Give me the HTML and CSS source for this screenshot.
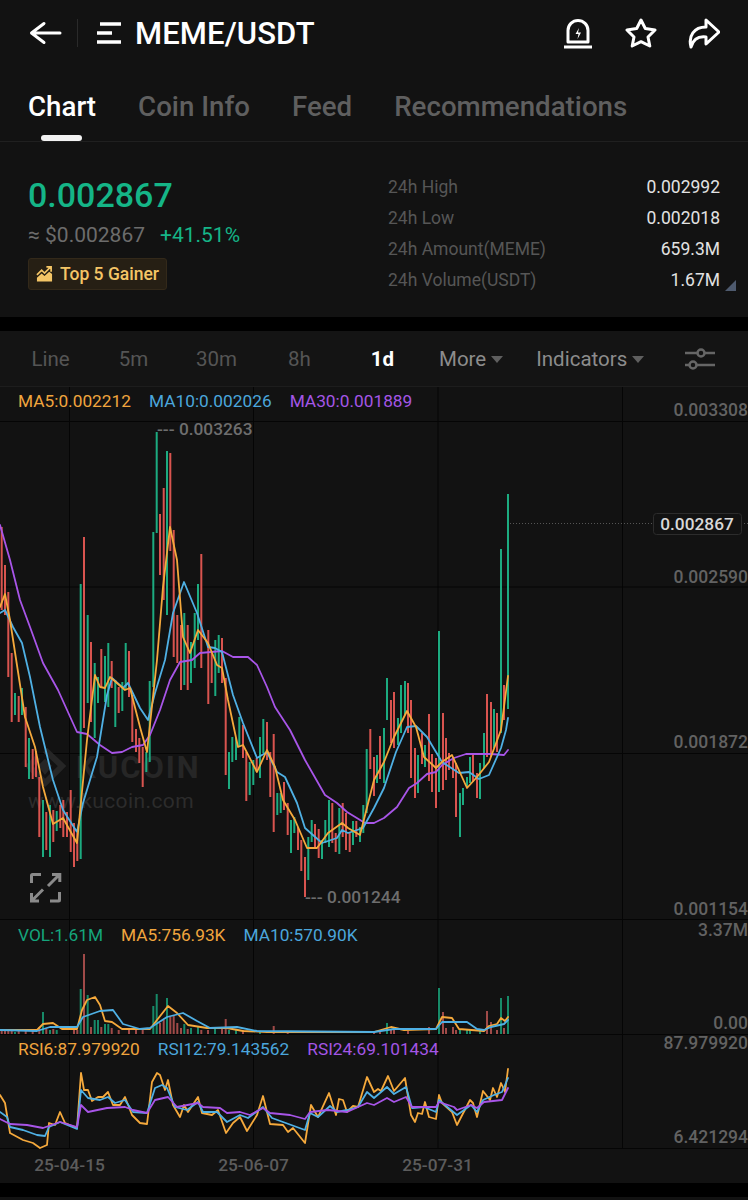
FILE: index.html
```html
<!DOCTYPE html>
<html lang="en">
<head>
    <meta charset="UTF-8">
    <meta name="viewport" content="width=device-width, initial-scale=1.0">
    <title>MEME/USDT</title>
    <link rel="stylesheet" href="styles.css">
</head>
<body>
    <section class="summary">
        <header class="topbar">
            <svg class="icon back" viewBox="0 0 34 24"><path d="M31 12H3M15 2.500L2.500 12L15 21.500"/></svg>
            <span class="divider"></span>
            <svg class="icon menu" viewBox="0 0 26 22"><path d="M4 2H25M1 11H16M1 20H25"/></svg>
            <h1 class="pair">MEME/USDT</h1>
            <div class="actions">
                <svg class="icon" viewBox="0 0 32 32"><path d="M6 25V13.500a10 10 0 0 1 20 0V25Z"/><path class="solid" d="M2 30H30" /><path class="bolt" d="M17 11l-3.500 6h3l-1 5l3.500-6.500h-3z"/></svg>
                <svg class="icon star" viewBox="0 0 32 32"><path d="M16 3L20.300 11.500L30 13L23 20L24.800 29L16 24.700L7.200 29L9 20L2 13L11.700 11.500Z"/></svg>
                <svg class="icon" viewBox="0 0 32 32"><path d="M18 3L31 15L18 27V20C10 19 5 23 3 30C0 19 6 10 18 10Z"/></svg>
            </div>
        </header>

        <nav class="tabs">
            <a class="tab active">Chart</a>
            <a class="tab">Coin Info</a>
            <a class="tab">Feed</a>
            <a class="tab">Recommendations</a>
        </nav>

        <div class="ticker">
            <div class="price-box">
                <div class="price">0.002867</div>
                <div class="price-sub">
                    <span class="fiat">≈ $0.002867</span>
                    <span class="change">+41.51%</span>
                </div>
                <div class="badge">
                    <svg class="badge-icon" viewBox="0 0 18 18"><path class="badge-fill" d="M1 17V13L6 8.500L9 11L14 6.500L17 9V17Z"/><path class="badge-line" d="M1 10L6 5L9 8L15 2M11 1.500H16V6.500"/></svg>
                    Top 5 Gainer
                </div>
            </div>
            <dl class="stats">
                <div class="stat"><dt>24h High</dt><dd>0.002992</dd></div>
                <div class="stat"><dt>24h Low</dt><dd>0.002018</dd></div>
                <div class="stat"><dt>24h Amount(MEME)</dt><dd>659.3M</dd></div>
                <div class="stat"><dt>24h Volume(USDT)</dt><dd>1.67M</dd></div>
            </dl>
            <span class="corner"></span>
        </div>
    </section>

    <section class="chart">
        <div class="toolbar">
            <span class="period">Line</span>
            <span class="period">5m</span>
            <span class="period">30m</span>
            <span class="period">8h</span>
            <span class="period active">1d</span>
            <span class="menu-btn more">More<i class="caret"></i></span>
            <span class="menu-btn indicators">Indicators<i class="caret"></i></span>
            <svg class="sliders" viewBox="0 0 30 24"><path d="M0 6H12M20 6H30M0 18H4M12 18H30"/><circle cx="16" cy="6" r="3.500"/><circle cx="8" cy="18" r="3.500"/></svg>
        </div>

        <!-- price pane, svg uses page coordinates -->
        <div class="pane pane-main">
            <svg class="plot" viewBox="0 387 748 533">
                <path class="grid" d="M69.500 387V920M253.500 387V920M438 387V920M622.500 387V920M0 421.500H748M0 587H748M0 753.500H748M0 919.500H748"/>

                <g class="mark">
                    <path class="mark-logo" d="M45 750L62 766L45 783L29 766L38 757M45 763L48 766L45 770L42 766Z"/>
                    <text class="mark-name" x="76" y="778">KUCOIN</text>
                    <text class="mark-url" x="28" y="808">www.kucoin.com</text>
                </g>

                <path class="wick up" d="M15 693V715M22 688V715M29 738V779M43 800V857M50 805V857M56.700 811V831M80.700 584V859M87.700 615V703M94.700 663V738M98 677V703M105 656V702M108.300 643V707M115.300 680V727M122.300 682V711M125.700 643V690M146.300 752V772M149.700 681V762M153.300 532V687M156.700 432V533M167 451V615M184.300 613V685M191 642V683M194.700 613V668M198 584V640M215.300 640V696M218.700 635V673M229 752V789M232.300 737V762M236 738V760M239.300 717V747M249.700 762V795M253.300 760V785M260 737V778M263.300 719V753M277.300 793V815M280.700 793V813M291 820V853M294.300 817V833M308.300 837V880M311.700 820V842M322 840V859M325.300 820V843M329 800V847M339.300 808V854M353 821V845M360 827V842M363.300 805V833M366.700 749V813M377 755V783M384 728V783M387 678V720M398 718V745M401 685V733M405 681V715M418 755V793M425 745V767M439 631V792M460 793V837M463 788V805M467 777V788M470 757V783M480 763V799M484 733V768M494 709V748M501 549V733M508 494V709"/>
                <path class="wick down" d="M1.700 527V610M5 565V615M8.300 592V677M11.700 653V722M18.700 696V722M25.700 707V767M32.700 749V779M36 751V777M39.300 777V837M46.300 812V850M53.300 810V842M60.300 805V828M63.300 800V837M67 812V837M70.700 790V852M74 823V867M77.300 833V861M84 537V728M91 642V722M101.300 649V688M111.700 661V688M118.700 687V713M129 651V697M132.300 695V742M136 729V752M139.300 738V763M142.700 747V787M160 514V575M163.700 488V600M170.300 453V551M173.700 530V657M177.300 615V663M181 625V690M187.700 625V690M201.300 554V668M208.300 630V704M211.700 653V683M222 638V683M225.700 678V775M243 725V758M246.300 752V801M256.700 758V772M267 722V760M270.300 752V797M273.700 734V832M284 782V810M287.700 803V835M298 827V850M301.300 840V871M305 857V897M315 824V847M318.700 829V858M332.300 803V843M335.700 833V852M342.700 803V837M346 813V850M349.700 833V852M356.300 821V837M370.300 729V769M374 757V796M380 736V779M391 700V743M394 692V748M408 683V733M411 700V778M415 748V798M422 733V764M429 714V781M432 754V792M436 758V808M443 713V790M446 738V780M449 753V770M453 757V778M456 763V817M473 753V782M477 773V798M487 694V757M491 702V757M497 713V752M504 685V720"/>

                <polyline class="line ma30" points="0,525 10,560 20,600 30,627 43,663 58,690 77,732 87,734 100,745 112,753 122,752 132,747 143,745 150,735 160,710 170,680 180,662 192,660 200,653 222,651 233,657 248,657 257,665 267,687 275,707 290,730 305,760 325,795 337,803 347,812 365,823 374,823 384,818 397,807 409,788 417,783 427,774 436,772 442,765 454,758 466,754 491,754 504,755 508,750"/>
                <polyline class="line ma10" points="0,613 5,610 13,627 22,643 30,677 40,727 53,780 63,810 77,832 83,803 97,757 107,695 112,678 123,688 128,683 140,708 148,720 155,693 165,660 173,613 184,582 197,613 208,647 215,648 222,652 233,695 243,723 257,758 267,752 277,772 285,777 297,803 305,828 322,843 337,838 342,830 348,833 363,828 374,808 384,788 396,752 407,727 416,726 427,737 442,762 459,773 469,772 479,779 489,775 501,748 506,730 508,718"/>
                <polyline class="line ma5" points="0,607 5,594 10,620 25,717 35,747 43,787 53,824 63,818 77,843 87,740 95,675 100,687 105,688 110,677 125,690 130,688 140,727 147,752 157,660 163,587 170,527 177,560 183,637 190,653 198,630 208,643 217,665 222,668 228,700 238,747 243,745 257,772 267,750 275,767 283,800 295,820 307,848 317,848 328,833 342,823 348,828 360,835 374,780 384,762 394,737 407,711 416,727 424,757 436,768 442,762 452,755 467,788 477,777 489,762 501,730 508,676"/>

                <path class="dots" d="M510 523.500H653M741 523.500H748"/>
                <rect class="last-box" x="653.500" y="513.500" width="88" height="21" rx="3"/>
                <text class="last-text" x="697" y="530">0.002867</text>

                <text class="extreme" x="157" y="435">--- 0.003263</text>
                <text class="extreme" x="305" y="903">--- 0.001244</text>

                <text class="axis" x="748" y="416">0.003308</text>
                <text class="axis" x="748" y="583">0.002590</text>
                <text class="axis" x="748" y="748">0.001872</text>
                <text class="axis" x="748" y="915">0.001154</text>

                <path class="expand" d="M31.500 883V875.500Q31.500 874.500 32.500 874.500H41M59.500 892V900Q59.500 901 58.500 901H50M48 886L59 875M52 874.500H59.800V882M43 889.500L32 900.500M39 901H31.500V893"/>
            </svg>
            <div class="legend">
                <span class="c-ma5">MA5:0.002212</span>
                <span class="c-ma10">MA10:0.002026</span>
                <span class="c-ma30">MA30:0.001889</span>
            </div>
        </div>

        <div class="pane pane-vol">
            <svg class="plot" viewBox="0 920 748 115">
                <path class="grid" d="M69.500 920V1034M253.500 920V1034M438 920V1034M622.500 920V1034M0 1034.500H748"/>
                <path class="bar up" d="M15 1032V1034M43 1012V1034M50 1030V1034M56.700 1030V1034M80.700 989V1034M87.700 995V1034M94.700 1020V1034M98 1020V1034M105 1024V1034M108.300 1024V1034M153.300 1006V1034M156.700 994V1034M167 998V1034M184.300 1024V1034M191 1028V1034M198 1027V1034M215 1029V1034M229 1030V1034M236 1030V1034M260 1031V1034M387 1023V1034M439 988V1034M460 1030V1034M467 1030V1034M470 1030V1034M480 1030V1034M501 998V1034M508 996V1034"/>
                <path class="bar down" d="M1.700 1030V1034M5 1030V1034M8.300 1030V1034M11.700 1030V1034M18.700 1030V1034M25.700 1031V1034M32.700 1030V1034M39.300 1027V1034M46.300 1029V1034M53.300 1029V1034M74 1030V1034M77.300 1030V1034M84 954V1034M91 1027V1034M101.300 1027V1034M111.700 1028V1034M118.700 1030V1034M129 1030V1034M136 1030V1034M142.700 1030V1034M160 1023V1034M163.700 1020V1034M170.300 1017V1034M173.700 1015V1034M177.300 1023V1034M181 1028V1034M187.700 1029V1034M201.300 1030V1034M208 1030V1034M222 1029V1034M225.700 1019V1034M243 1030V1034M273.700 1026V1034M287.700 1031V1034M374 1031V1034M380 1031V1034M391 1030V1034M394 1030V1034M408 1031V1034M429 1027V1034M443 1012V1034M446 1028V1034M453 1027V1034M456 1030V1034M487 1011V1034M491 1022V1034M497 1030V1034M504 1028V1034"/>
                <polyline class="line ma5" points="0,1030 37,1030 43,1024 53,1023 62,1029 77,1029 82,1010 87,1000 95,997 100,1005 105,1021 112,1022 122,1029 150,1029 157,1020 168,1006 177,1013 188,1025 207,1028 227,1028 243,1031 267,1032 374,1032 391,1027 404,1030 436,1029 442,1017 452,1018 459,1029 484,1031 489,1026 497,1024 501,1018 505,1021 508,1017"/>
                <polyline class="line ma10" points="0,1030 37,1031 50,1027 77,1027 83,1017 100,1011 113,1010 123,1024 140,1029 150,1028 167,1017 183,1013 197,1021 210,1028 237,1027 257,1031 374,1032 394,1029 436,1029 442,1022 467,1022 477,1029 484,1030 491,1027 504,1024 508,1020"/>
                <text class="axis" x="748" y="936">3.37M</text>
                <text class="axis" x="748" y="1029">0.00</text>
            </svg>
            <div class="legend">
                <span class="c-vol">VOL:1.61M</span>
                <span class="c-ma5">MA5:756.93K</span>
                <span class="c-ma10">MA10:570.90K</span>
            </div>
        </div>

        <div class="pane pane-rsi">
            <svg class="plot" viewBox="0 1035 748 114">
                <path class="grid" d="M69.500 1035V1148M253.500 1035V1148M438 1035V1148M622.500 1035V1148M0 1148.500H748"/>
                <polyline class="line ma5" points="0,1095 5,1103 10,1133 23,1140 33,1143 40,1148 47,1145 49,1123 55,1125 60,1112 65,1123 77,1128 81,1073 84,1090 88,1090 92,1101 98,1097 103,1097 108,1092 113,1105 120,1105 125,1097 132,1115 140,1123 147,1124 152,1082 157,1073 160,1075 165,1090 168,1080 173,1105 180,1117 184,1105 188,1112 198,1097 202,1113 212,1115 218,1110 226,1133 233,1123 240,1117 247,1131 257,1115 263,1096 270,1124 283,1125 288,1132 293,1128 305,1143 311,1105 318,1117 329,1093 336,1115 339,1099 343,1100 347,1112 353,1106 358,1107 367,1077 374,1092 378,1089 381,1091 388,1076 394,1091 405,1078 411,1115 415,1122 418,1113 422,1114 425,1102 429,1117 436,1119 439,1095 442,1103 452,1112 457,1125 470,1100 473,1103 477,1117 483,1091 490,1100 493,1088 497,1097 501,1083 505,1092 508,1069"/>
                <polyline class="line ma10" points="0,1112 7,1117 10,1127 23,1130 37,1135 45,1136 49,1127 60,1122 77,1129 81,1090 88,1098 100,1100 108,1097 115,1103 125,1100 133,1112 147,1113 155,1088 162,1085 167,1088 175,1107 187,1110 198,1102 203,1112 217,1112 227,1122 240,1115 248,1118 263,1107 272,1118 283,1122 305,1130 310,1113 318,1117 330,1106 337,1112 347,1110 358,1107 367,1092 374,1098 387,1087 394,1094 406,1087 412,1108 424,1107 436,1112 439,1100 457,1115 471,1105 477,1112 483,1100 494,1095 502,1092 508,1078"/>
                <polyline class="line ma30" points="0,1119 10,1124 27,1125 43,1128 60,1122 77,1127 81,1105 88,1112 107,1108 125,1107 133,1110 147,1113 155,1100 168,1097 177,1107 198,1103 203,1107 220,1108 227,1113 240,1112 250,1115 263,1108 270,1113 290,1115 305,1119 310,1112 328,1110 347,1112 367,1103 374,1105 387,1098 394,1102 406,1097 412,1107 436,1107 439,1102 454,1107 457,1110 471,1105 477,1108 484,1102 502,1100 508,1088"/>
                <text class="axis" x="748" y="1049">87.979920</text>
                <text class="axis" x="748" y="1143">6.421294</text>
            </svg>
            <div class="legend">
                <span class="c-ma5">RSI6:87.979920</span>
                <span class="c-ma10">RSI12:79.143562</span>
                <span class="c-ma30">RSI24:69.101434</span>
            </div>
        </div>

        <div class="dates">
            <span class="date">25-04-15</span>
            <span class="date">25-06-07</span>
            <span class="date">25-07-31</span>
        </div>
    </section>

    <div class="bottom-strip"></div>
</body>
</html>
```

FILE: styles.css
```css
* {
    box-sizing: border-box;
}

body {
    margin: 0;
    padding: 0;
    width: 748px;
    height: 1200px;
    overflow: hidden;
    background-color: #000;
    font-family: "Roboto", "Liberation Sans", sans-serif;
    color: #fff;
}

/* Top summary */
.summary {
    height: 317px;
    background: #121212;
}

.topbar {
    display: flex;
    align-items: center;
    height: 66px;
    padding: 0 28px 0 29px;
}

.icon {
    fill: none;
    stroke: #fff;
    stroke-width: 3;
    stroke-linecap: round;
    stroke-linejoin: round;
}

.back {
    width: 34px;
    height: 24px;
}

.divider {
    width: 1px;
    height: 28px;
    margin: 0 18px 0 14px;
    background: #2a2a2a;
}

.menu {
    width: 26px;
    height: 22px;
    stroke-width: 3.5;
    stroke-linecap: butt;
}

.pair {
    margin: 0 0 0 13px;
    font-size: 31px;
    font-weight: 500;
    letter-spacing: 0.100px;
}

.actions {
    display: flex;
    align-items: center;
    gap: 31px;
    margin-left: auto;
}

.actions .icon {
    width: 32px;
    height: 32px;
}

.actions .solid {
    stroke-linecap: butt;
}

.bolt {
    fill: #fff;
    stroke: none;
}

.tabs {
    display: flex;
    gap: 42px;
    height: 76px;
    padding: 21px 0 0 28px;
    border-bottom: 1px solid #202020;
}

.tab {
    position: relative;
    font-size: 27.700px;
    font-weight: 500;
    line-height: 40px;
    color: #5f5f5f;
}

.tab.active {
    color: #fff;
}

.tab.active::after {
    content: "";
    position: absolute;
    left: 13px;
    bottom: 0;
    width: 41px;
    height: 6px;
    border-radius: 3px;
    background: #f2f2f2;
}

.ticker {
    position: relative;
    display: flex;
    justify-content: space-between;
    padding: 29px 28px 0;
}

.price {
    font-size: 34px;
    font-weight: 500;
    line-height: 48px;
    color: #15b587;
}

.price-sub {
    display: flex;
    gap: 15px;
    margin-top: 1px;
    font-size: 21px;
    line-height: 30px;
}

.fiat {
    color: #6c6c6c;
}

.change {
    color: #15b587;
}

.badge {
    display: inline-flex;
    align-items: center;
    gap: 7px;
    height: 32px;
    margin-top: 8px;
    padding: 0 7px;
    border: 1px solid #33291a;
    border-radius: 3px;
    background: #261f14;
    font-size: 17.500px;
    font-weight: 500;
    color: #f4c566;
}

.badge-icon {
    width: 17px;
    height: 18px;
}

.badge-fill {
    fill: #f4c566;
}

.badge-line {
    fill: none;
    stroke: #f4c566;
    stroke-width: 1.800;
}

.stats {
    width: 332px;
    margin: 1px 0 0;
}

.stat {
    display: flex;
    justify-content: space-between;
    height: 31px;
    font-size: 17.500px;
    line-height: 31px;
}

.stat dt {
    color: #565656;
}

.stat dd {
    margin: 0;
    color: #e2e2e2;
}

.corner {
    position: absolute;
    right: 12px;
    top: 138px;
    width: 0;
    height: 0;
    border-left: 11px solid transparent;
    border-bottom: 11px solid #4e5a6e;
}

/* Chart */
.chart {
    height: 852px;
    margin-top: 14px;
    background: #121212;
}

.toolbar {
    display: flex;
    align-items: center;
    height: 56px;
    padding-left: 9px;
    border-bottom: 1px solid #1d1d1d;
    background: #141414;
    font-size: 20.500px;
}

.period {
    width: 83px;
    text-align: center;
    color: #555;
}

.period.active {
    font-weight: 700;
    color: #fff;
}

.menu-btn {
    display: flex;
    align-items: center;
    gap: 5px;
    color: #8c8c8c;
}

.more {
    margin-left: 15px;
}

.indicators {
    margin-left: 33px;
}

.caret {
    width: 0;
    height: 0;
    margin-top: 1px;
    border-left: 6px solid transparent;
    border-right: 6px solid transparent;
    border-top: 7px solid #5f5f5f;
}

.sliders {
    width: 30px;
    height: 24px;
    margin-left: 41px;
    fill: none;
    stroke: #666;
    stroke-width: 2.500;
}

.pane {
    position: relative;
}

.pane-main {
    height: 533px;
}

.pane-vol {
    height: 115px;
}

.pane-rsi {
    height: 114px;
}

.plot {
    display: block;
    width: 748px;
    height: 100%;
    overflow: visible;
}

.legend {
    position: absolute;
    top: 3px;
    left: 18px;
    display: flex;
    gap: 18px;
    font-size: 17.300px;
    line-height: 22px;
}

.pane-vol .legend {
    top: 4px;
}

.pane-rsi .legend {
    top: 3px;
}

.c-ma5 { color: #f0a53e; }
.c-ma10 { color: #4ba6dc; }
.c-ma30 { color: #a456e6; }
.c-vol { color: #15a57c; }

.grid {
    fill: none;
    stroke: #050505;
    stroke-width: 1;
}

.wick {
    fill: none;
    stroke-width: 2;
}

.wick.up { stroke: #1cab80; }
.wick.down { stroke: #d9544f; }

.bar {
    fill: none;
    stroke-width: 2;
}

.bar.up { stroke: #178a68; }
.bar.down { stroke: #a04a48; }

.line {
    fill: none;
    stroke-width: 1.800;
    stroke-linejoin: round;
    stroke-linecap: round;
}

.line.ma5 { stroke: #f5a93c; }
.line.ma10 { stroke: #4fb0e4; }
.line.ma30 { stroke: #a855e8; }

.axis {
    font-size: 17.500px;
    font-weight: 500;
    text-anchor: end;
    fill: #626262;
}

.extreme {
    font-size: 17.300px;
    font-weight: 500;
    fill: #6e6e6e;
}

.dots {
    fill: none;
    stroke: #555;
    stroke-width: 1;
    stroke-dasharray: 1 2;
}

.last-box {
    fill: #121212;
    stroke: #2c2c2c;
}

.last-text {
    font-size: 17.300px;
    font-weight: 500;
    text-anchor: middle;
    fill: #d8d8d8;
}

.mark-logo {
    fill: none;
    stroke: #262626;
    stroke-width: 6;
}

.mark-name {
    font-size: 31px;
    font-weight: 700;
    letter-spacing: 2px;
    fill: #262626;
}

.mark-url {
    font-size: 21px;
    letter-spacing: 0.400px;
    fill: #2c2c2c;
}

.expand {
    fill: none;
    stroke: #8a8a8a;
    stroke-width: 3;
}

.dates {
    display: flex;
    height: 32px;
    padding-left: 34px;
    gap: 113px;
    align-items: center;
    font-size: 17.300px;
    font-weight: 500;
    color: #5c5c5c;
}

.date {
    width: 71px;
    text-align: center;
    white-space: nowrap;
}

.bottom-strip {
    height: 3px;
    margin-top: 14px;
    background: #121212;
}
```
